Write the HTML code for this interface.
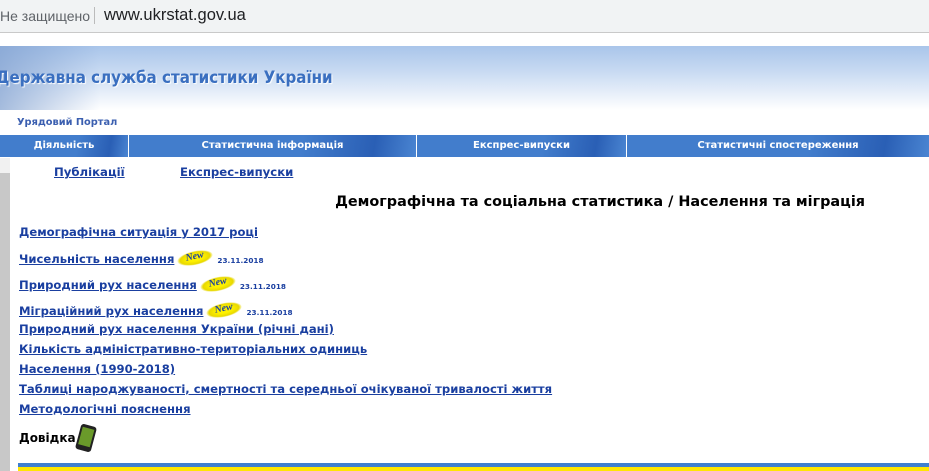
<!DOCTYPE html>
<html><head><meta charset="utf-8"><style>
*{margin:0;padding:0;box-sizing:border-box}
body{width:929px;height:471px;overflow:hidden;background:#fff;position:relative;font-family:"DejaVu Sans","Liberation Sans",sans-serif}
.abs{position:absolute;white-space:nowrap}
#bar{left:0;top:0;width:929px;height:33px;background:#f1f3f4;border-bottom:1px solid #c9c9c9}
#hdr{left:0;top:46px;width:929px;height:64px;background:linear-gradient(#a9c5ea,#c8daf2 40%,#fff)}
.nav{top:135px;height:22px;background:linear-gradient(100deg,#427dcc 60%,#2a5fb5 85%,#4a85d2);color:#fff;font-size:10px;font-weight:bold;text-align:center;line-height:22px}
a{color:#1a3fa0;font-weight:bold;text-decoration:underline}
.l{left:19px;font-size:11.6px}
.d{font-size:7.3px;font-weight:bold;color:#1a3fa0}
.new{display:inline-block;width:36px;height:14px;border-radius:50%;background:radial-gradient(#fff200 30%,#e8d800 60%,rgba(255,255,255,0) 72%);color:#1a3fa0;font:italic bold 10px "Liberation Serif",serif;text-align:center;line-height:12px;transform:rotate(-12deg);vertical-align:4px;margin:0 4px 0 3px}
</style></head><body>
<div class="abs" id="bar"></div>
<div class="abs" style="left:0;top:8px;font:14px 'Liberation Sans',sans-serif;color:#5f6368">Не защищено</div>
<div class="abs" style="left:94px;top:7px;width:1px;height:17px;background:#bbb"></div>
<div class="abs" style="left:104px;top:6px;font:16.5px 'Liberation Sans',sans-serif;color:#202124">www.ukrstat.gov.ua</div>
<div class="abs" id="hdr"></div>
<div class="abs" style="left:0;top:46px;width:100px;height:64px;background:linear-gradient(90deg,#7f9fcf,rgba(160,190,230,0));opacity:.7"></div>
<div class="abs" style="left:-4px;top:67px;font-family:'DejaVu Sans Condensed','DejaVu Sans',sans-serif;font-size:16.8px;font-weight:bold;color:#3a6fc0;text-shadow:1px 1px 1px #fff">Державна служба статистики України</div>
<div class="abs" style="left:17px;top:117px;font-size:9.8px;font-weight:bold;color:#3b5fb0">Урядовий Портал</div>
<div class="abs nav" style="left:0;width:128px">Діяльність</div>
<div class="abs nav" style="left:129px;width:287px">Статистична інформація</div>
<div class="abs nav" style="left:417px;width:209px">Експрес-випуски</div>
<div class="abs nav" style="left:627px;width:302px">Статистичні спостереження</div>
<div class="abs" style="left:0;top:158px;width:10px;height:313px;background:#c8c8c8"></div>
<div class="abs" style="left:0;top:158px;width:10px;height:15px;background:#f1f1f1"></div>
<a class="abs" style="left:54px;top:165px;font-size:11.7px">Публікації</a>
<a class="abs" style="left:180px;top:165px;font-size:11.7px">Експрес-випуски</a>
<div class="abs" style="right:64px;top:194px;font-size:14.4px;font-weight:bold;color:#000">Демографічна та соціальна статистика / Населення та міграція</div>
<a class="abs l" style="top:225px">Демографічна ситуація у 2017 році</a>
<div class="abs" style="left:19px;top:248px"><a style="font-size:11.6px">Чисельність населення</a><span class="new">New</span><span class="d">23.11.2018</span></div>
<div class="abs" style="left:19px;top:274px"><a style="font-size:11.6px">Природний рух населення</a><span class="new">New</span><span class="d">23.11.2018</span></div>
<div class="abs" style="left:19px;top:300px"><a style="font-size:11.6px">Міграційний рух населення</a><span class="new">New</span><span class="d">23.11.2018</span></div>
<a class="abs l" style="top:322px">Природний рух населення України (річні дані)</a>
<a class="abs l" style="top:342px">Кількість адміністративно-територіальних одиниць</a>
<a class="abs l" style="top:362px">Населення (1990-2018)</a>
<a class="abs l" style="top:382px">Таблиці народжуваності, смертності та середньої очікуваної тривалості життя</a>
<a class="abs l" style="top:402px">Методологічні пояснення</a>
<div class="abs" style="left:19px;top:431px;font-size:12px;font-weight:bold;color:#000">Довідка</div>
<div class="abs" style="left:78px;top:425px;width:16px;height:26px;border-radius:3px;background:#222;transform:rotate(15deg)"><div style="margin:3px 2px;height:18px;background:#6a9a2a"></div></div>
<div class="abs" style="left:18px;top:463px;width:911px;height:4px;background:#3f7fd0"></div>
<div class="abs" style="left:18px;top:467px;width:911px;height:4px;background:#ffe600"></div>
</body></html>
